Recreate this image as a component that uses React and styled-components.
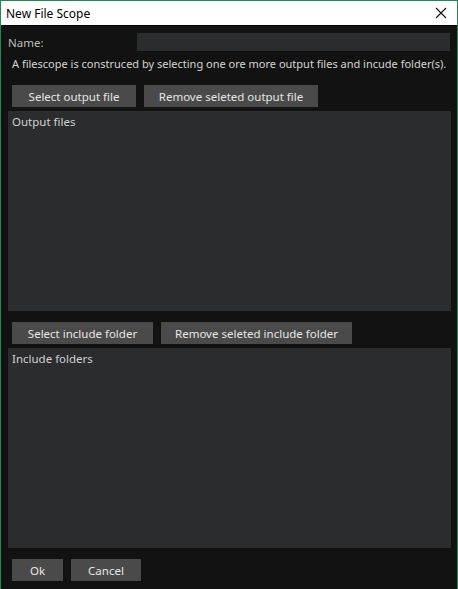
import React from "react";
import styled, { createGlobalStyle } from "styled-components";

const Global = createGlobalStyle`
  html, body {
    margin: 0;
    padding: 0;
    background: #121212;
  }
  * { box-sizing: border-box; }
`;

export default function App() {
  return (
    <>
      <Global />
      <Window>
        <TitleBar>
          <Title>New File Scope</Title>
          <Close>
            <svg width="12" height="12" viewBox="0 0 12 12">
              <path d="M1 1 L11 11 M11 1 L1 11" stroke="#111" strokeWidth="1.1" />
            </svg>
          </Close>
        </TitleBar>
        <Body>
          <NameRow>
            <Label>Name:</Label>
            <NameInput />
          </NameRow>
          <Hint>A filescope is construced by selecting one ore more output files and incude folder(s).</Hint>
          <ButtonRow $top={13}>
            <Button $w={124}>Select output file</Button>
            <Button $w={174}>Remove seleted output file</Button>
          </ButtonRow>
          <ListPanel>Output files</ListPanel>
          <ButtonRow $top={11}>
            <Button $w={141}>Select include folder</Button>
            <Button $w={191}>Remove seleted include folder</Button>
          </ButtonRow>
          <ListPanel>Include folders</ListPanel>
          <ButtonRow $top={11}>
            <Button $w={51}>Ok</Button>
            <Button $w={70}>Cancel</Button>
          </ButtonRow>
        </Body>
      </Window>
    </>
  );
}

const Window = styled.div`
  width: 458px;
  height: 589px;
  border: 1px solid #1f8a4f;
  border-bottom: none;
  background: #121212;
  font-family: "Noto Sans", "Open Sans", sans-serif;
  font-size: 12px;
  display: flex;
  flex-direction: column;
`;

const TitleBar = styled.div`
  height: 25px;
  background: #ffffff;
  border-bottom: 1px solid #000;
  display: flex;
  align-items: center;
  justify-content: space-between;
  padding: 0 10px 0 5px;
`;

const Title = styled.div`
  color: #000;
  font-size: 12px;
`;

const Close = styled.div`
  display: flex;
  align-items: center;
`;

const Body = styled.div`
  padding: 7px 5px 0 7px;
  display: flex;
  flex-direction: column;
`;

const NameRow = styled.div`
  display: flex;
  align-items: center;
  justify-content: space-between;
  padding-right: 2px;
`;

const Label = styled.div`
  color: #bdbdbd;
  font-size: 11.5px;
`;

const NameInput = styled.div`
  width: 313px;
  height: 18px;
  background: #2b2c2e;
`;

const Hint = styled.div`
  margin-top: 5px;
  padding-left: 4px;
  color: #d4d4d4;
  font-size: 11px;
  white-space: nowrap;
  line-height: 16px;
`;

const ButtonRow = styled.div`
  margin-top: ${(p) => p.$top}px;
  padding-left: 4px;
  display: flex;
  gap: 8px;
`;

const Button = styled.div`
  width: ${(p) => p.$w}px;
  height: 22px;
  background: #4a4a4a;
  color: #e6e6e6;
  font-size: 11.5px;
  display: flex;
  align-items: center;
  justify-content: center;
`;

const ListPanel = styled.div`
  margin-top: 4px;
  width: 443px;
  height: 200px;
  background: #2b2c2e;
  color: #d0d0d0;
  font-size: 11.5px;
  padding: 4px 4px;
  line-height: 14px;
`;
